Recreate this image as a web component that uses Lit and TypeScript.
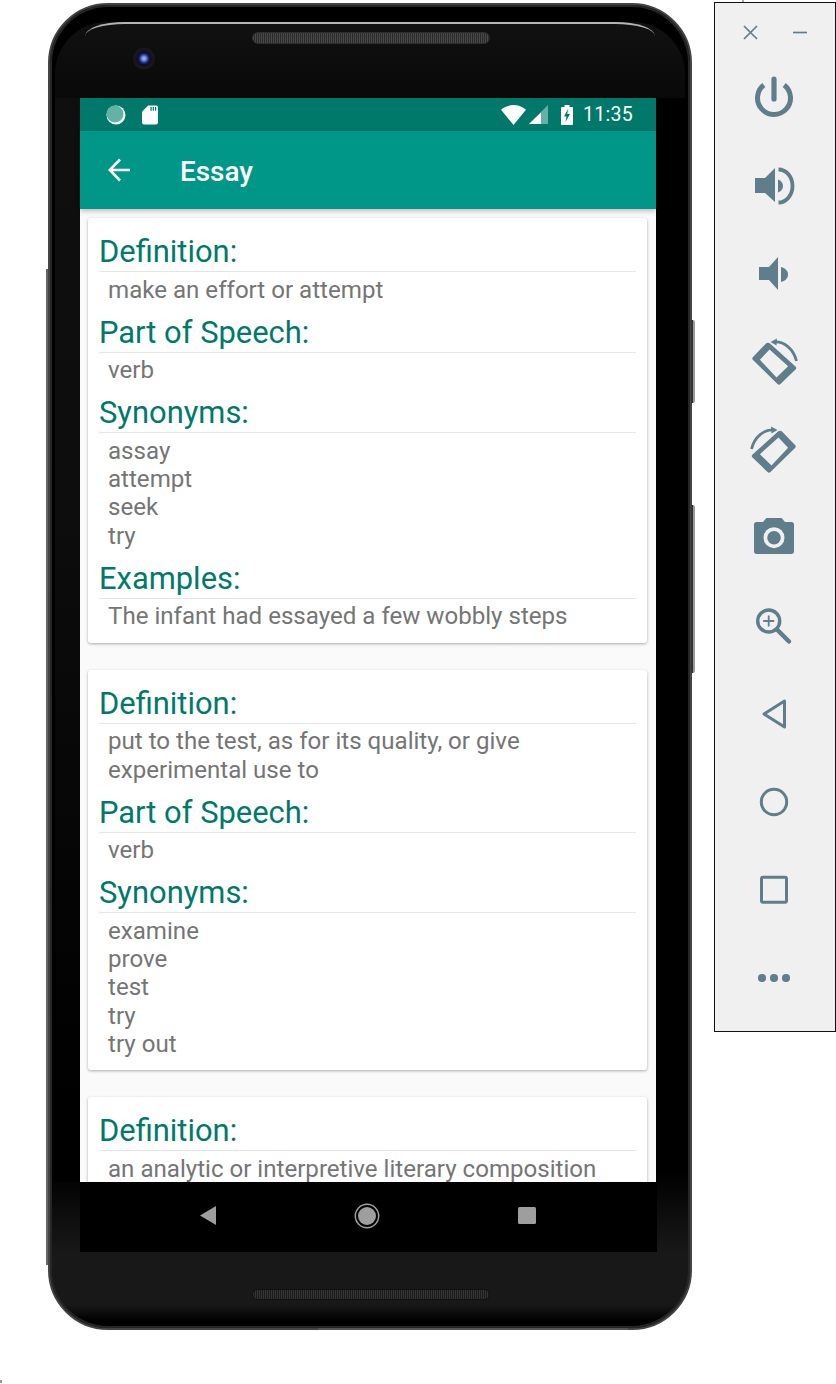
import { LitElement, css, html, svg } from 'lit';
import { customElement } from 'lit/decorators.js';

interface Section {
  title: string;
  lines: string[];
}

const CARDS: Section[][] = [
  [
    { title: 'Definition:', lines: ['make an effort or attempt'] },
    { title: 'Part of Speech:', lines: ['verb'] },
    { title: 'Synonyms:', lines: ['assay', 'attempt', 'seek', 'try'] },
    { title: 'Examples:', lines: ['The infant had essayed a few wobbly steps'] },
  ],
  [
    { title: 'Definition:', lines: ['put to the test, as for its quality, or give', 'experimental use to'] },
    { title: 'Part of Speech:', lines: ['verb'] },
    { title: 'Synonyms:', lines: ['examine', 'prove', 'test', 'try', 'try out'] },
  ],
  [{ title: 'Definition:', lines: ['an analytic or interpretive literary composition'] }],
];

const ROTATE = svg`
  <path class="fill" d="M12 1.500-1 15c-1 1-1 2 0 3L23.500 42c1 1 2 1 3 0l15-14.500c1-1 1-2 0-3L16 1.500c-1-1-3-1-4 0z"/>
  <path class="hole" d="M15.500 7.600 5.900 17.800 22.500 35.400 34.100 24.200z"/>
  <path d="M20 0C30-1 39.500 7 42.500 19" stroke-width="2.800"/>
  <path class="fill" d="M16.500 0 23-3.500l-.5 7z"/>
`;

// Werkzeugleiste rechts: 40px pro Icon, Mitte auf dem 88px-Raster
const TOOLS = [
  svg`<path d="M20 1v20" stroke-width="5.200" stroke-linecap="round"/><path d="M9.800 7a16.500 16.500 0 1 0 20.400 0" stroke-width="5"/>`,
  svg`<path class="fill" d="M1 12h10L21 2v34L11 27H1z"/><path class="fill" d="M24 13.500c3 1 5 3.500 5 6.500s-2 5.500-5 6.500z"/><path d="M24.500 3.500A14 16.500 0 0 1 24.500 36.500" stroke-width="3.800"/>`,
  svg`<path class="fill" d="M5 13h10l9-10v33l-9-10H5z"/><path class="fill" d="M27 13c4 1 7 3.500 7 7.500s-3 6.500-7 7.500z"/>`,
  ROTATE,
  svg`<g transform="translate(40 0) scale(-1 1)">${ROTATE}</g>`,
  svg`<path class="fill" d="M2.500 4H9l2.500-3c.3-.4.8-1 1.500-1h14c.7 0 1.200.6 1.500 1L31 4h6.500C39 4 40 5 40 6.500v27c0 1.500-1 2.500-2.500 2.500h-35C1 36 0 35 0 33.500v-27C0 5 1 4 2.500 4z"/><circle class="hole" cx="20" cy="19.700" r="10.500"/><circle class="fill" cx="20" cy="19.700" r="6.800"/>`,
  svg`<circle cx="14.700" cy="15" r="11" stroke-width="3.400"/><path d="M23.500 24 35 35.500" stroke-width="4.500" stroke-linecap="round"/><path d="M14.700 9.500v11M9.200 15h11" stroke-width="1.800"/>`,
  svg`<path d="M30.500 7v26L10 20z" stroke-width="3" stroke-linejoin="round"/>`,
  svg`<circle cx="20" cy="20" r="12.700" stroke-width="3"/>`,
  svg`<rect x="7.500" y="7.300" width="25" height="25" rx="1.500" stroke-width="3"/>`,
];

@customElement('app-root')
export class AppRoot extends LitElement {
  static styles = css`
    :host {
      display: block;
      position: relative;
      width: 836px;
      height: 1384px;
      overflow: hidden;
      background: #fff;
      font-family: Roboto, 'Liberation Sans', sans-serif;
    }
    .page {
      display: flex;
      align-items: flex-start;
    }

    /* Geraet */
    .phone {
      position: relative;
      box-sizing: border-box;
      flex: none;
      width: 644px;
      height: 1327px;
      margin: 3px 0 0 48px;
      padding: 93px 0 0 30px;
      border: 2px solid #444;
      border-radius: 60px;
      background: linear-gradient(#000 0, #000 1165px, #181818 1247px, #181818 1300px, #000 1316px);
      box-shadow: inset 0 0 0 2px #262626;
    }
    .edge {
      position: absolute;
      left: -4px;
      top: 264px;
      width: 2px;
      height: 996px;
      background: #666;
    }
    .edge-bottom {
      position: absolute;
      left: 268px;
      top: 1323px;
      width: 310px;
      height: 2px;
      background: #555;
    }
    .shade {
      position: absolute;
      left: 5px;
      top: 93px;
      width: 25px;
      height: 1084px;
      background: linear-gradient(#0f0f0f 0, #0d0d0d 400px, #000 1000px);
    }
    .face {
      position: absolute;
      left: 5px;
      top: 17px;
      width: 630px;
      height: 76px;
      border-radius: 52px 52px 0 0;
      background: linear-gradient(#111, #090909);
    }
    .rim {
      position: absolute;
      left: 35px;
      top: 17px;
      width: 570px;
      height: 14px;
      box-sizing: border-box;
      border-top: 2px solid #b4b4b4;
      border-radius: 40px 40px 0 0 / 14px 14px 0 0;
    }
    .grille {
      position: absolute;
      left: 202px;
      width: 238px;
      box-sizing: border-box;
      border-radius: 6px;
      border: 1px solid #2d2d2d;
      background: repeating-linear-gradient(90deg, #4a4a4a 0 1px, #2a2a2a 1px 2px);
    }
    .grille.top {
      top: 27px;
      height: 12px;
    }
    .grille.bottom {
      top: 1284px;
      height: 11px;
      border-color: #111;
      background: repeating-linear-gradient(90deg, #343434 0 1px, #1c1c1c 1px 2px);
    }
    .camera {
      position: absolute;
      left: 82px;
      top: 42px;
      width: 24px;
      height: 24px;
      border-radius: 50%;
      background: radial-gradient(circle at 50% 48%, #8fa3e8 0 1.5px, #2a3a9a 4px, #0b0e2a 6px, #1a1a1a 10px, #0a0a0a 12px);
    }
    .side {
      position: absolute;
      left: 641px;
      width: 4px;
      background: linear-gradient(90deg, #333 0 2px, #9a9a9a 2px 4px);
      border-radius: 0 2px 2px 0;
    }
    .side.power {
      top: 315px;
      height: 83px;
    }
    .side.volume {
      top: 500px;
      height: 168px;
    }
    .tick {
      position: absolute;
      left: 742px;
      top: 0;
      width: 2px;
      height: 2px;
      background: #aaa;
    }
    .mark {
      position: absolute;
      left: 0;
      top: 1380px;
      width: 2px;
      height: 3px;
      background: #999;
    }

    /* Bildschirm */
    .screen {
      position: relative;
      display: flex;
      flex-direction: column;
      width: 576px;
      height: 1084px;
      background: #fafafa;
    }
    .status {
      flex: none;
      display: flex;
      align-items: center;
      height: 33px;
      padding: 0 23px 0 26px;
      background: #00796b;
      color: #fff;
    }
    .status .time {
      font-size: 19.500px;
      letter-spacing: 0.3px;
      margin-left: 10px;
      color: #fff;
    }
    .status svg {
      display: block;
    }
    .status .spacer {
      flex: 1;
    }
    .sd {
      margin-left: 16px;
    }
    .signal {
      margin-left: 3px;
    }
    .battery {
      margin-left: 13px;
    }
    .appbar {
      flex: none;
      display: flex;
      align-items: center;
      position: relative;
      height: 78px;
      padding-left: 28px;
      background: #009688;
      color: #fff;
      box-shadow: 0 2px 5px rgba(0, 0, 0, 0.25);
    }
    .appbar .title {
      margin-left: 50px;
      padding-top: 3px;
      font-size: 27.900px;
      font-weight: 500;
    }
    .list {
      flex: 1;
      min-height: 0;
      overflow: hidden;
      padding: 9px 9px 0 8px;
    }
    .card {
      box-sizing: border-box;
      margin-bottom: 27px;
      padding: 11px 11px 6.500px 11px;
      background: #fff;
      border-radius: 3px;
      box-shadow: 0 1px 3px rgba(0, 0, 0, 0.32);
    }
    .heading {
      height: 39px;
      padding-top: 3px;
      border-bottom: 1px solid #e6e6e6;
      color: #00796b;
      font-size: 30.900px;
      line-height: 40px;
    }
    .body {
      padding: 3.600px 0 5.700px 9px;
      color: #757575;
      font-size: 24.100px;
      line-height: 28.300px;
    }

    /* Navigationsleiste */
    .nav {
      display: flex;
      align-items: center;
      justify-content: space-between;
      position: relative;
      box-sizing: border-box;
      width: 577px;
      height: 70px;
      padding: 0 121px 3px 120px;
      background: #000;
    }
    .nav svg {
      display: block;
    }

    /* Emulator-Leiste */
    .toolbar {
      flex: none;
      box-sizing: border-box;
      width: 122px;
      height: 1030px;
      margin: 2px 0 0 22px;
      border: 1px solid #111;
      background: #f0f0f0;
    }
    .window {
      display: flex;
      justify-content: space-between;
      padding: 22px 28px 0 28px;
    }
    .window svg {
      display: block;
    }
    .tools {
      display: flex;
      flex-direction: column;
      align-items: center;
      gap: 48px;
      margin-top: 38px;
      padding-right: 2px;
    }
    .tools svg {
      display: block;
      width: 40px;
      height: 40px;
      overflow: visible;
      fill: none;
      stroke: #607d8b;
    }
    .tools .fill {
      fill: #607d8b;
      stroke: none;
    }
    .tools .hole {
      fill: #f0f0f0;
      stroke: none;
    }
    .dots {
      display: flex;
      gap: 4.700px;
      height: 40px;
      align-items: center;
    }
    .dots i {
      width: 7.500px;
      height: 7.500px;
      border-radius: 50%;
      background: #607d8b;
    }
  `;

  render() {
    return html`
      <div class="page">
        <div class="phone">
          <div class="edge"></div>
          <div class="edge-bottom"></div>
          <div class="shade"></div>
          <div class="face"></div>
          <div class="rim"></div>
          <div class="grille top"></div>
          <div class="camera"></div>
          <div class="side power"></div>
          <div class="side volume"></div>
          <div class="screen">
            ${this.renderStatus()}
            <div class="appbar">
              <svg width="22" height="24" viewBox="0 0 22 24" fill="none" stroke="#fff" stroke-width="2.600">
                <path d="M22 12H2.500M12 1.500 1.800 12 12 22.500"/>
              </svg>
              <div class="title">Essay</div>
            </div>
            <div class="list">${CARDS.map((c) => this.renderCard(c))}</div>
          </div>
          <div class="nav">
            <svg width="16" height="19" viewBox="0 0 16 19"><path d="M16 0v19L0 9.500z" fill="#9e9e9e"/></svg>
            <svg width="26" height="26" viewBox="0 0 26 26"><circle cx="13" cy="13" r="11.700" fill="none" stroke="#9e9e9e" stroke-width="1.500"/><circle cx="13" cy="13" r="9" fill="#9e9e9e"/></svg>
            <svg width="18" height="17" viewBox="0 0 18 17"><rect width="18" height="17" rx="1.500" fill="#9e9e9e"/></svg>
          </div>
          <div class="grille bottom"></div>
        </div>
        ${this.renderToolbar()}
      </div>
      <div class="tick"></div>
      <div class="mark"></div>
    `;
  }

  renderStatus() {
    return html`
      <div class="status">
        <svg width="20" height="20" viewBox="0 0 20 20"><circle cx="10" cy="10" r="9.500" fill="#fff"/><circle cx="9" cy="9" r="8.500" fill="#62b3a7"/></svg>
        <svg class="sd" width="16" height="20" viewBox="0 0 17 20"><path d="M6.500 0H15c1 0 2 .9 2 2v16c0 1.100-.9 2-2 2H2c-1.100 0-2-.9-2-2V6.500z" fill="#fff"/><path d="M9 1.500h1.300v4H9zM11.400 1.500h1.300v4h-1.300zM13.800 1.500h1.300v4h-1.300z" fill="#00796b"/></svg>
        <div class="spacer"></div>
        <svg width="25" height="20" viewBox="0 0 24 19"><path d="M12 19 0 4.500C3.500 1.600 7.500 0 12 0s8.500 1.600 12 4.500z" fill="#fff"/></svg>
        <svg class="signal" width="19" height="19" viewBox="0 0 19 19"><path d="M19 0v19H0z" fill="#66afa6"/><path d="M12 7.500V19H0z" fill="#fff"/></svg>
        <svg class="battery" width="12" height="20" viewBox="0 0 12 20"><path d="M3.500 0h5v2H11c.6 0 1 .4 1 1v16c0 .6-.4 1-1 1H1c-.6 0-1-.4-1-1V3c0-.6.4-1 1-1h2.500z" fill="#fff"/><path d="M7 4 3 11.500h2.500L4.500 17 9 9H6.300z" fill="#00796b"/></svg>
        <span class="time">11:35</span>
      </div>
    `;
  }

  renderCard(sections: Section[]) {
    return html`
      <div class="card">
        ${sections.map(
          (s) => html`
            <div class="heading">${s.title}</div>
            <div class="body">${s.lines.map((l) => html`<div>${l}</div>`)}</div>
          `,
        )}
      </div>
    `;
  }

  renderToolbar() {
    return html`
      <div class="toolbar">
        <div class="window">
          <svg width="15" height="15" viewBox="0 0 15 15" fill="none" stroke="#607d8b" stroke-width="1.700"><path d="M1 1l13 13M14 1 1 14"/></svg>
          <svg width="14" height="15" viewBox="0 0 14 15" fill="none" stroke="#607d8b" stroke-width="1.700"><path d="M0 7.500h14"/></svg>
        </div>
        <div class="tools">
          ${TOOLS.map((t) => html`<svg viewBox="0 0 40 40">${t}</svg>`)}
          <div class="dots"><i></i><i></i><i></i></div>
        </div>
      </div>
    `;
  }
}
